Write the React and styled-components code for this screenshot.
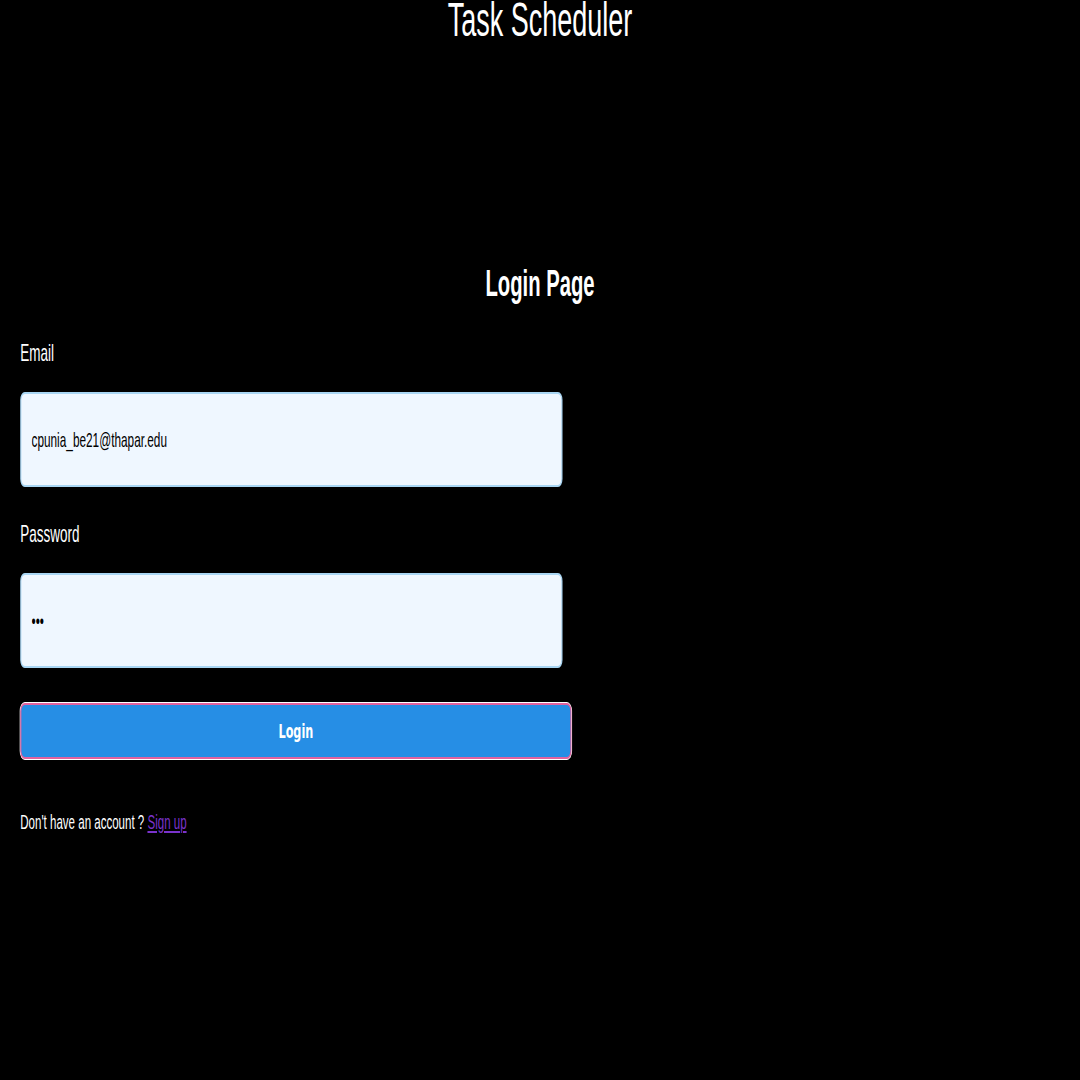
import React from "react";
import styled, { createGlobalStyle } from "styled-components";

// The reference was captured at 1920 wide and squeezed to 1080, so the page
// is laid out at 1920 and scaled on the x axis only.
const SQUEEZE = 1080 / 1920;

const GlobalStyle = createGlobalStyle`
  html, body {
    margin: 0;
    padding: 0;
    background: #000000;
    overflow: hidden;
  }
`;

const Stage = styled.div`
  width: 1920px;
  height: 1080px;
  transform: scaleX(${SQUEEZE});
  transform-origin: 0 0;
  font-family: "Liberation Sans", Arial, sans-serif;
  color: #ffffff;
`;

const Title = styled.h1`
  margin: 0;
  font-size: 48px;
  line-height: 40px;
  font-weight: 400;
  text-align: center;
`;

const Form = styled.form`
  display: flex;
  flex-direction: column;
  padding: 0 36px;
  margin-top: 226px;
`;

const Heading = styled.h2`
  margin: 0 0 39px 0;
  font-size: 36px;
  line-height: 36px;
  font-weight: 700;
  text-align: center;
`;

const Field = styled.div`
  display: flex;
  flex-direction: column;
  gap: 27px;
  margin-bottom: 35px;
`;

const Label = styled.label`
  font-size: 24px;
  line-height: 24px;
`;

const Input = styled.input`
  box-sizing: border-box;
  width: 964px;
  height: 95px;
  padding: 0 18px;
  border: 2px solid #a9d6f3;
  border-radius: 8px;
  background: #eff7ff;
  color: #000000;
  font-family: "Liberation Sans", Arial, sans-serif;
  font-size: 21px;
  outline: none;
`;

const Button = styled.button`
  box-sizing: border-box;
  width: 980px;
  height: 56px;
  border: 2px solid #e2629f;
  border-radius: 8px;
  box-shadow: 0 0 0 1px #ffffff;
  background: #268ee5;
  color: #ffffff;
  font-family: "DejaVu Sans", sans-serif;
  font-size: 20px;
  font-weight: 700;
  cursor: pointer;
`;

const Footer = styled.p`
  margin: 52px 0 0 0;
  font-size: 20.5px;
  line-height: 21px;
`;

const Link = styled.a`
  color: #7a33cc;
  text-decoration: underline;
`;

const App = () => {
  return (
    <>
      <GlobalStyle />
      <Stage>
        <Title>Task Scheduler</Title>
        <Form onSubmit={(e) => e.preventDefault()}>
          <Heading>Login Page</Heading>
          <Field>
            <Label htmlFor="email">Email</Label>
            <Input id="email" type="text" defaultValue="cpunia_be21@thapar.edu" />
          </Field>
          <Field>
            <Label htmlFor="password">Password</Label>
            <Input id="password" type="password" defaultValue="abc" />
          </Field>
          <Button type="submit">Login</Button>
          <Footer>
            Don't have an account ? <Link href="#">Sign up</Link>
          </Footer>
        </Form>
      </Stage>
    </>
  );
};

export default App;
